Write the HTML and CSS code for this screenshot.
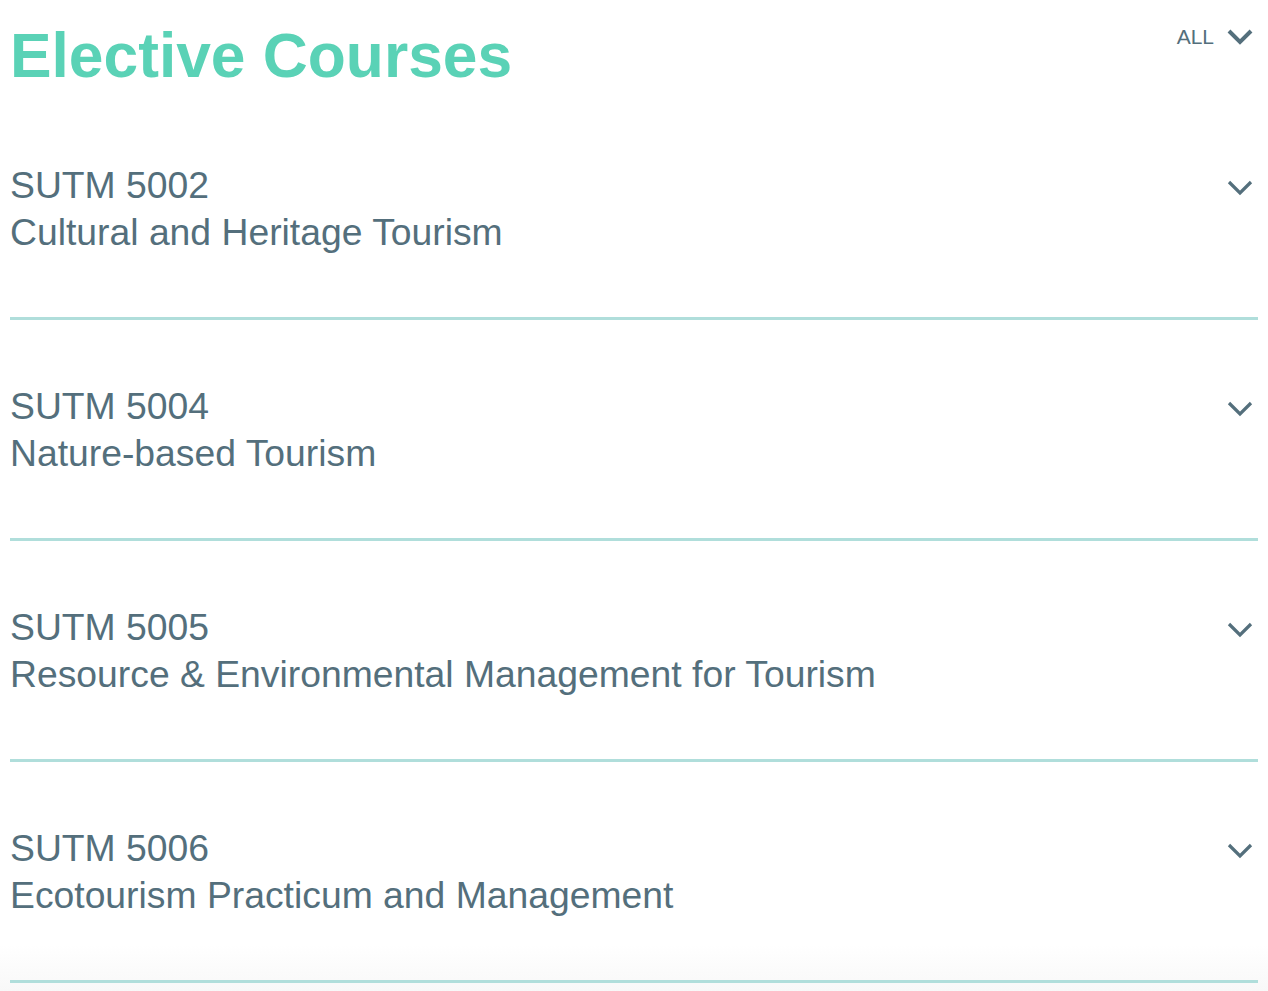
FILE: index.html
```html
<html>
<head>
<link rel="stylesheet" href="styles.css">
</head>
<body>
 <div class="courses">
	<div class="courses-head">
		<h1>Elective Courses</h1>
		<div class="filter">ALL <svg class="chev chev-bold" viewBox="0 0 26 16"><polyline points="2,2 13,13 24,2"/></svg></div>
	</div>

	<div class="course">
		<div class="course-text">
			<div>SUTM 5002</div>
			<div>Cultural and Heritage Tourism</div>
		</div>
		<div class="course-toggle"><svg class="chev" viewBox="0 0 26 16"><polyline points="2,2 13,13 24,2"/></svg></div>
	</div>

	<div class="course">
		<div class="course-text">
			<div>SUTM 5004</div>
			<div>Nature-based Tourism</div>
		</div>
		<div class="course-toggle"><svg class="chev" viewBox="0 0 26 16"><polyline points="2,2 13,13 24,2"/></svg></div>
	</div>

	<div class="course">
		<div class="course-text">
			<div>SUTM 5005</div>
			<div>Resource &amp; Environmental Management for Tourism</div>
		</div>
		<div class="course-toggle"><svg class="chev" viewBox="0 0 26 16"><polyline points="2,2 13,13 24,2"/></svg></div>
	</div>

	<div class="course">
		<div class="course-text">
			<div>SUTM 5006</div>
			<div>Ecotourism Practicum and Management</div>
		</div>
		<div class="course-toggle"><svg class="chev" viewBox="0 0 26 16"><polyline points="2,2 13,13 24,2"/></svg></div>
	</div>
 </div>
</body>
</html>
```

FILE: styles.css
```css
html {
  height: 100%;
  background: linear-gradient(to bottom, #fff 945px, #f8f8f8 991px);
}

body {
  margin: 0;
  font-family: "Liberation Sans", Arial, sans-serif;
  color: #546f7c;
}

.courses {
  padding: 0 10px;
}

.courses-head {
  display: flex;
  justify-content: space-between;
  align-items: flex-start;
  height: 99px;
}

.courses-head h1 {
  margin: 19px 0 0 0;
  font-size: 62.3px;
  line-height: 74px;
  font-weight: 700;
  color: #5ad2b6;
}

.filter {
  display: flex;
  align-items: center;
  gap: 13px;
  margin-top: 24px;
  padding-right: 5px;
  font-size: 21px;
  line-height: 26px;
}

.chev {
  width: 26px;
  height: 16px;
  fill: none;
  stroke: #546f7c;
  stroke-width: 3.2;
}

.chev-bold {
  stroke-width: 4;
}

.course {
  display: flex;
  justify-content: space-between;
  padding: 63px 0 61px 0;
  border-bottom: 3px solid #b0dedb;
}

.course-text {
  font-size: 37.3px;
  line-height: 47px;
}

.course-toggle {
  display: flex;
  align-items: center;
  height: 47px;
  margin-top: 2px;
  padding-right: 5px;
}
```
